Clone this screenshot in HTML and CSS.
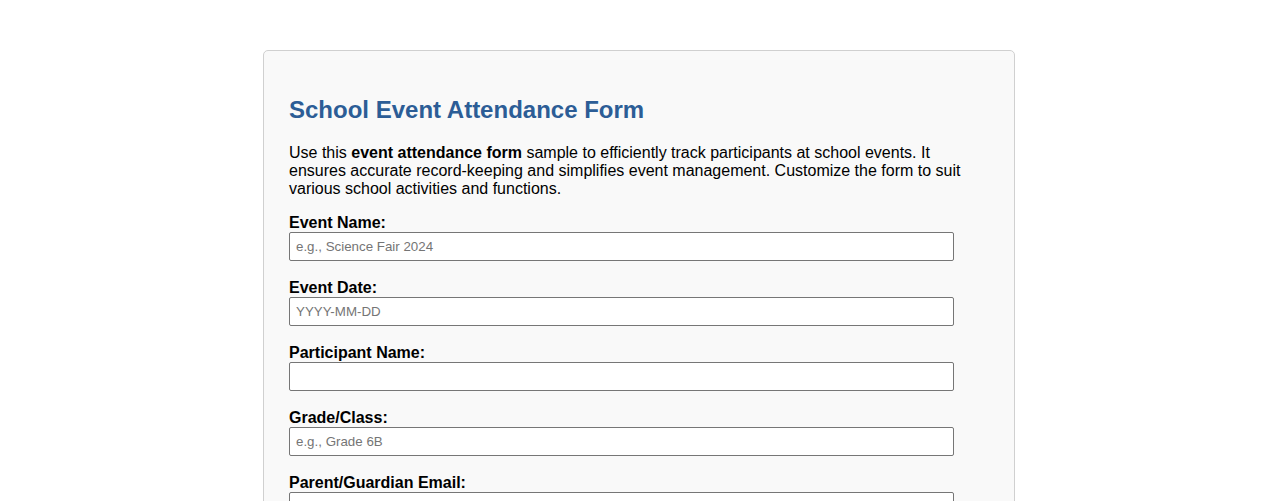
FILE: index.html
```html
<!DOCTYPE html>
<html lang="en">
<head>
<meta charset="utf-8">
<title>School Event Attendance Form</title>
<link rel="stylesheet" href="styles.css">
</head>
<body>
<div class="container">
  <h2 class="title">School Event Attendance Form</h2>
  <p class="intro">Use this <strong>event attendance form</strong> sample to efficiently track participants at school events. It ensures accurate record-keeping and simplifies event management. Customize the form to suit various school activities and functions.</p>
  <form class="form">
    <label class="label" for="event-name">Event Name:</label>
    <input class="field" type="text" id="event-name" placeholder="e.g., Science Fair 2024">
    <label class="label" for="event-date">Event Date:</label>
    <input class="field" type="text" id="event-date" placeholder="YYYY-MM-DD">
    <label class="label" for="participant">Participant Name:</label>
    <input class="field" type="text" id="participant">
    <label class="label" for="grade">Grade/Class:</label>
    <input class="field" type="text" id="grade" placeholder="e.g., Grade 6B">
    <label class="label" for="email">Parent/Guardian Email:</label>
    <input class="field" type="email" id="email">
  </form>
</div>
</body>
</html>
```
FILE: styles.css
```css
html, body {
  margin: 0;
  padding: 0;
  background: #ffffff;
}
body {
  font-family: "Liberation Sans", Arial, sans-serif;
  color: #000;
}
.container {
  width: 700px;
  margin: 50px auto;
  padding: 25px;
  background: #f9f9f9;
  border: 1px solid #d0d0d0;
  border-radius: 5px;
}
.title {
  font-size: 24px;
  color: #2c5d96;
  margin: 20px 0 20px;
  line-height: 28px;
}
.intro {
  font-size: 16px;
  line-height: 18px;
  margin: 0 0 16px;
}
.form {
  display: flex;
  flex-direction: column;
  align-items: flex-start;
}
.label {
  font-weight: bold;
  font-size: 16px;
  line-height: 18px;
  margin-bottom: 0;
}
.field {
  box-sizing: border-box;
  width: 95%;
  height: 29px;
  padding: 4px 6px;
  font-family: "Liberation Sans", Arial, sans-serif;
  font-size: 13.33px;
  border: 1px solid #767676;
  border-radius: 2px;
  background: #fff;
  margin-bottom: 18px;
}
.field::placeholder {
  color: #757575;
}
```
